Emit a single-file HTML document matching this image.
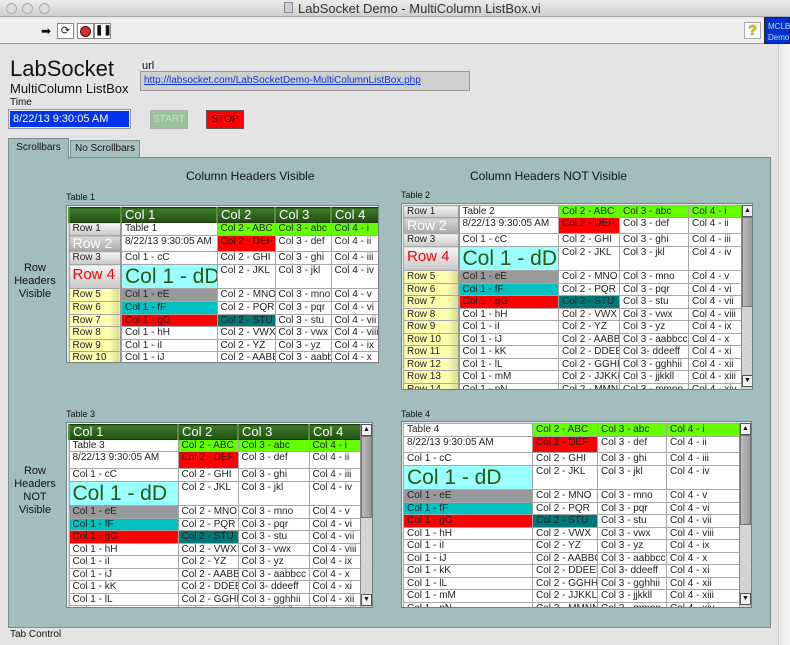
<!DOCTYPE html>
<html><head><meta charset="utf-8"><style>
*{margin:0;padding:0;box-sizing:border-box}
body{width:790px;height:645px;overflow:hidden;background:#e4e4e4;font-family:"Liberation Sans",sans-serif;position:relative;color:#111}
.a{position:absolute;white-space:nowrap}
.t{position:absolute;background:#d4d8d8;border:1px solid #6f8282;overflow:hidden;box-shadow:inset 1px 1px 0 #eee}
table{border-collapse:collapse;table-layout:fixed;font:10px "Liberation Sans",sans-serif;position:absolute;left:1px;top:1px}
td{border:1px solid #a6a6a6;padding:0 0 0 3px;white-space:nowrap;overflow:hidden;background:#fff;vertical-align:top;line-height:11px;color:#222}
td.h{background:linear-gradient(#3f7a2a,#22500f);color:#fff;font-size:13px;line-height:14px;border-color:#1a3a0a;border-left:2px solid #5a8a40}
td.g{background:#66ff00}
td.r{background:#ff0000}
td.gr{background:#999}
td.c{background:#00c0c0}
td.tl{background:#007878}
td.big{background:#99ffff;color:#2a5a10;font-size:21px;line-height:23px}
td.rh{background:linear-gradient(#f4f4f4,#c8c8c8);color:#222;border-right:2px solid #999}
td.rh2{background:linear-gradient(#d8d8d8,#a8a8a8);color:#fff;font-size:14px;line-height:14px;border-right:2px solid #999}
td.rh4{background:linear-gradient(#f4f4f4,#c8c8c8);color:#f00;font-size:15px;line-height:19px;border-right:2px solid #999}
td.ry{background:linear-gradient(90deg,#ffffb0 80%,#d8d890);border-right:2px solid #999}
.sb{position:absolute;width:12px;background:repeating-linear-gradient(45deg,#c8c8c8 0 1px,#e0e0e0 1px 2px);border-left:1px solid #888}
.sb .up,.sb .dn{position:absolute;left:0;width:11px;height:12px;background:#f0f0f0;border:1px solid #555;font-size:7px;line-height:10px;text-align:center}
.sb .th{position:absolute;left:0;width:11px;background:linear-gradient(90deg,#bbb,#999);border:1px solid #777}
</style></head><body>
<div class="a" style="left:0;top:0;width:790px;height:17px;background:linear-gradient(#ececec,#cfcfcf);border-bottom:1px solid #aaa"></div>
<div class="a" style="left:6px;top:3px;width:11px;height:11px;border-radius:50%;background:#ddd;border:1px solid #aaa"></div>
<div class="a" style="left:22px;top:3px;width:11px;height:11px;border-radius:50%;background:#ddd;border:1px solid #aaa"></div>
<div class="a" style="left:39px;top:3px;width:11px;height:11px;border-radius:50%;background:#ddd;border:1px solid #aaa"></div>
<div class="a" style="left:284px;top:2px;width:9px;height:11px;background:#ccd;border:1px solid #888"></div>
<div class="a" style="left:298px;top:1px;font-size:13px;color:#333">LabSocket Demo - MultiColumn ListBox.vi</div>
<div class="a" style="left:0;top:18px;width:790px;height:26px;background:#ededed;border-bottom:1px solid #999"></div>
<div class="a" style="left:41px;top:24px;font-size:12px">➡</div>
<div class="a" style="left:57px;top:23px;width:17px;height:16px;border:1px solid #888;background:#fff;font-size:11px;text-align:center">⟳</div>
<div class="a" style="left:77px;top:23px;width:17px;height:16px;border:1px solid #888;background:#fff"><div style="margin:2px;width:11px;height:11px;border-radius:50%;background:#c33;border:1px solid #600"></div></div>
<div class="a" style="left:94px;top:23px;width:17px;height:16px;border:1px solid #888;background:#fff;font-size:10px;font-weight:bold;text-align:center;line-height:14px">❚❚</div>
<div class="a" style="left:744px;top:22px;width:17px;height:17px;border:1px solid #aaa;background:#fafafa;color:#cc0;font-weight:bold;font-size:15px;text-align:center;line-height:16px;text-shadow:0 0 1px #000">?</div>
<div class="a" style="left:764px;top:17px;width:26px;height:27px;background:#0033cc;border:1px solid #222;color:#cde;font-size:8px;line-height:11px;padding:3px 0 0 3px;white-space:normal">MCLB Demo</div>
<div class="a" style="left:778px;top:44px;width:12px;height:601px;background:linear-gradient(90deg,#e8e8e8,#f8f8f8);border-left:1px solid #ccc"></div>
<div class="a" style="left:10px;top:56px;font-size:22px">LabSocket</div>
<div class="a" style="left:10px;top:81px;font-size:13px">MultiColumn ListBox</div>
<div class="a" style="left:10px;top:97px;font-size:10px">Time</div>
<div class="a" style="left:9px;top:110px;width:121px;height:18px;background:#0033ee;border:1px solid #eee;box-shadow:0 0 0 1px #999;color:#fff;font-size:11px;padding:2px 0 0 3px">8/22/13 9:30:05 AM</div>
<div class="a" style="left:142px;top:60px;font-size:11px">url</div>
<div class="a" style="left:140px;top:71px;width:330px;height:20px;background:#d0d0d0;border:1px solid #999;font-size:10px;padding:3px 0 0 3px;color:#1133cc;text-decoration:underline;overflow:hidden">http://labsocket.com/LabSocketDemo-MultiColumnListBox.php</div>
<div class="a" style="left:150px;top:110px;width:38px;height:19px;background:#99c499;border:1px solid #aaa;color:#c8e0c8;font-size:10px;text-align:center;line-height:17px">START</div>
<div class="a" style="left:206px;top:110px;width:38px;height:19px;background:#ff0000;border:1px solid #555;color:#300;font-size:10px;text-align:center;line-height:17px">STOP</div>
<div class="a" style="left:70px;top:140px;width:70px;height:18px;background:#a8c0c0;border:1px solid #7a9090;font-size:10px;text-align:center;line-height:16px">No Scrollbars</div>
<div class="a" style="left:8px;top:157px;width:763px;height:471px;background:#a3bdbd;border:1px solid #7a9090"></div>
<div class="a" style="left:8px;top:138px;width:61px;height:21px;background:#a3bdbd;border:1px solid #7a9090;border-bottom:none;font-size:10px;text-align:center;line-height:17px">Scrollbars</div>
<div class="a" style="left:10px;top:629px;font-size:10px">Tab Control</div>
<div class="a" style="left:186px;top:169px;font-size:12px">Column Headers Visible</div>
<div class="a" style="left:470px;top:169px;font-size:12px">Column Headers NOT Visible</div>
<div class="a" style="left:14px;top:262px;width:42px;font-size:11px;text-align:center;white-space:normal;line-height:13px">Row Headers Visible</div>
<div class="a" style="left:14px;top:465px;width:42px;font-size:11px;text-align:center;white-space:normal;line-height:13px">Row Headers NOT Visible</div>
<div class="a" style="left:66px;top:192px;font-size:9px">Table 1</div>
<div class="a" style="left:401px;top:190px;font-size:9px">Table 2</div>
<div class="a" style="left:66px;top:409px;font-size:9px">Table 3</div>
<div class="a" style="left:401px;top:409px;font-size:9px">Table 4</div>

<div class="t" style="left:66px;top:205px;width:313px;height:158px">
<table style="width:311px"><colgroup><col style="width:52px"><col style="width:96px"><col style="width:58px"><col style="width:56px"><col style="width:49px"></colgroup>
<tr style="height:15px"><td class="h"></td><td class="h">Col 1</td><td class="h">Col 2</td><td class="h">Col 3</td><td class="h">Col 4</td></tr>
<tr style="height:13px"><td class="rh">Row 1</td><td>Table 1</td><td class="g">Col 2 - ABC</td><td class="g">Col 3 - abc</td><td class="g">Col 4 - i</td></tr>
<tr style="height:16px"><td class="rh2">Row 2</td><td>8/22/13 9:30:05 AM</td><td class="r">Col 2 - DEF</td><td>Col 3 - def</td><td>Col 4 - ii</td></tr>
<tr style="height:13px"><td class="rh">Row 3</td><td>Col 1 - cC</td><td>Col 2 - GHI</td><td>Col 3 - ghi</td><td>Col 4 - iii</td></tr>
<tr style="height:24px"><td class="rh4">Row 4</td><td class="big">Col 1 - dD</td><td>Col 2 - JKL</td><td>Col 3 - jkl</td><td>Col 4 - iv</td></tr>
<tr style="height:13px"><td class="ry">Row 5</td><td class="gr">Col 1 - eE</td><td>Col 2 - MNO</td><td>Col 3 - mno</td><td>Col 4 - v</td></tr>
<tr style="height:13px"><td class="ry">Row 6</td><td class="c">Col 1 - fF</td><td>Col 2 - PQR</td><td>Col 3 - pqr</td><td>Col 4 - vi</td></tr>
<tr style="height:12px"><td class="ry">Row 7</td><td class="r">Col 1 - gG</td><td class="tl">Col 2 - STU</td><td>Col 3 - stu</td><td>Col 4 - vii</td></tr>
<tr style="height:13px"><td class="ry">Row 8</td><td>Col 1 - hH</td><td>Col 2 - VWX</td><td>Col 3 - vwx</td><td>Col 4 - viii</td></tr>
<tr style="height:12px"><td class="ry">Row 9</td><td>Col 1 - iI</td><td>Col 2 - YZ</td><td>Col 3 - yz</td><td>Col 4 - ix</td></tr>
<tr style="height:13px"><td class="ry">Row 10</td><td>Col 1 - iJ</td><td>Col 2 - AABBCC</td><td>Col 3 - aabbcc</td><td>Col 4 - x</td></tr>
</table></div>

<div class="t" style="left:401px;top:203px;width:352px;height:187px">
<table style="width:338px"><colgroup><col style="width:55px"><col style="width:100px"><col style="width:61px"><col style="width:69px"><col style="width:53px"></colgroup>
<tr style="height:12px"><td class="rh">Row 1</td><td>Table 2</td><td class="g">Col 2 - ABC</td><td class="g">Col 3 - abc</td><td class="g">Col 4 - i</td></tr>
<tr style="height:16px"><td class="rh2">Row 2</td><td>8/22/13 9:30:05 AM</td><td class="r">Col 2 - DEF</td><td>Col 3 - def</td><td>Col 4 - ii</td></tr>
<tr style="height:13px"><td class="rh">Row 3</td><td>Col 1 - cC</td><td>Col 2 - GHI</td><td>Col 3 - ghi</td><td>Col 4 - iii</td></tr>
<tr style="height:24px"><td class="rh4">Row 4</td><td class="big">Col 1 - dD</td><td>Col 2 - JKL</td><td>Col 3 - jkl</td><td>Col 4 - iv</td></tr>
<tr style="height:13px"><td class="ry">Row 5</td><td class="gr">Col 1 - eE</td><td>Col 2 - MNO</td><td>Col 3 - mno</td><td>Col 4 - v</td></tr>
<tr style="height:12px"><td class="ry">Row 6</td><td class="c">Col 1 - fF</td><td>Col 2 - PQR</td><td>Col 3 - pqr</td><td>Col 4 - vi</td></tr>
<tr style="height:13px"><td class="ry">Row 7</td><td class="r">Col 1 - gG</td><td class="tl">Col 2 - STU</td><td>Col 3 - stu</td><td>Col 4 - vii</td></tr>
<tr style="height:12px"><td class="ry">Row 8</td><td>Col 1 - hH</td><td>Col 2 - VWX</td><td>Col 3 - vwx</td><td>Col 4 - viii</td></tr>
<tr style="height:13px"><td class="ry">Row 9</td><td>Col 1 - iI</td><td>Col 2 - YZ</td><td>Col 3 - yz</td><td>Col 4 - ix</td></tr>
<tr style="height:12px"><td class="ry">Row 10</td><td>Col 1 - iJ</td><td>Col 2 - AABBCC</td><td>Col 3 - aabbcc</td><td>Col 4 - x</td></tr>
<tr style="height:13px"><td class="ry">Row 11</td><td>Col 1 - kK</td><td>Col 2 - DDEEFF</td><td>Col 3- ddeeff</td><td>Col 4 - xi</td></tr>
<tr style="height:12px"><td class="ry">Row 12</td><td>Col 1 - lL</td><td>Col 2 - GGHHII</td><td>Col 3 - gghhii</td><td>Col 4 - xii</td></tr>
<tr style="height:13px"><td class="ry">Row 13</td><td>Col 1 - mM</td><td>Col 2 - JJKKLL</td><td>Col 3 - jjkkll</td><td>Col 4 - xiii</td></tr>
<tr style="height:12px"><td class="ry">Row 14</td><td>Col 1 - nN</td><td>Col 2 - MMNN</td><td>Col 3 - mmnn</td><td>Col 4 - xiv</td></tr>
</table>
<div class="sb" style="left:339px;top:1px;height:182px"><div class="up" style="top:0">▲</div><div class="th" style="top:12px;height:90px"></div><div class="dn" style="bottom:0">▼</div></div>
</div>

<div class="t" style="left:66px;top:422px;width:307px;height:186px">
<table style="width:291px"><colgroup><col style="width:109px"><col style="width:60px"><col style="width:71px"><col style="width:51px"></colgroup>
<tr style="height:15px"><td class="h">Col 1</td><td class="h">Col 2</td><td class="h">Col 3</td><td class="h">Col 4</td></tr>
<tr style="height:12px"><td>Table 3</td><td class="g">Col 2 - ABC</td><td class="g">Col 3 - abc</td><td class="g">Col 4 - i</td></tr>
<tr style="height:17px"><td>8/22/13 9:30:05 AM</td><td class="r">Col 2 - DEF</td><td>Col 3 - def</td><td>Col 4 - ii</td></tr>
<tr style="height:13px"><td>Col 1 - cC</td><td>Col 2 - GHI</td><td>Col 3 - ghi</td><td>Col 4 - iii</td></tr>
<tr style="height:24px"><td class="big">Col 1 - dD</td><td>Col 2 - JKL</td><td>Col 3 - jkl</td><td>Col 4 - iv</td></tr>
<tr style="height:13px"><td class="gr">Col 1 - eE</td><td>Col 2 - MNO</td><td>Col 3 - mno</td><td>Col 4 - v</td></tr>
<tr style="height:12px"><td class="c">Col 1 - fF</td><td>Col 2 - PQR</td><td>Col 3 - pqr</td><td>Col 4 - vi</td></tr>
<tr style="height:13px"><td class="r">Col 1 - gG</td><td class="tl">Col 2 - STU</td><td>Col 3 - stu</td><td>Col 4 - vii</td></tr>
<tr style="height:12px"><td>Col 1 - hH</td><td>Col 2 - VWX</td><td>Col 3 - vwx</td><td>Col 4 - viii</td></tr>
<tr style="height:13px"><td>Col 1 - iI</td><td>Col 2 - YZ</td><td>Col 3 - yz</td><td>Col 4 - ix</td></tr>
<tr style="height:12px"><td>Col 1 - iJ</td><td>Col 2 - AABBCC</td><td>Col 3 - aabbcc</td><td>Col 4 - x</td></tr>
<tr style="height:13px"><td>Col 1 - kK</td><td>Col 2 - DDEEFF</td><td>Col 3- ddeeff</td><td>Col 4 - xi</td></tr>
<tr style="height:12px"><td>Col 1 - lL</td><td>Col 2 - GGHHII</td><td>Col 3 - gghhii</td><td>Col 4 - xii</td></tr>
<tr style="height:12px"><td>Col 1 - mM</td><td>Col 2 - JJKKLL</td><td>Col 3 - jjkkll</td><td>Col 4 - xiii</td></tr>
</table>
<div class="sb" style="left:293px;top:1px;height:182px"><div class="up" style="top:0">▲</div><div class="th" style="top:12px;height:82px"></div><div class="dn" style="bottom:0">▼</div></div>
</div>

<div class="t" style="left:401px;top:421px;width:351px;height:187px">
<table style="width:336px"><colgroup><col style="width:129px"><col style="width:65px"><col style="width:69px"><col style="width:73px"></colgroup>
<tr style="height:13px"><td>Table 4</td><td class="g">Col 2 - ABC</td><td class="g">Col 3 - abc</td><td class="g">Col 4 - i</td></tr>
<tr style="height:16px"><td>8/22/13 9:30:05 AM</td><td class="r">Col 2 - DEF</td><td>Col 3 - def</td><td>Col 4 - ii</td></tr>
<tr style="height:13px"><td>Col 1 - cC</td><td>Col 2 - GHI</td><td>Col 3 - ghi</td><td>Col 4 - iii</td></tr>
<tr style="height:24px"><td class="big">Col 1 - dD</td><td>Col 2 - JKL</td><td>Col 3 - jkl</td><td>Col 4 - iv</td></tr>
<tr style="height:13px"><td class="gr">Col 1 - eE</td><td>Col 2 - MNO</td><td>Col 3 - mno</td><td>Col 4 - v</td></tr>
<tr style="height:12px"><td class="c">Col 1 - fF</td><td>Col 2 - PQR</td><td>Col 3 - pqr</td><td>Col 4 - vi</td></tr>
<tr style="height:13px"><td class="r">Col 1 - gG</td><td class="tl">Col 2 - STU</td><td>Col 3 - stu</td><td>Col 4 - vii</td></tr>
<tr style="height:12px"><td>Col 1 - hH</td><td>Col 2 - VWX</td><td>Col 3 - vwx</td><td>Col 4 - viii</td></tr>
<tr style="height:13px"><td>Col 1 - iI</td><td>Col 2 - YZ</td><td>Col 3 - yz</td><td>Col 4 - ix</td></tr>
<tr style="height:12px"><td>Col 1 - iJ</td><td>Col 2 - AABBCC</td><td>Col 3 - aabbcc</td><td>Col 4 - x</td></tr>
<tr style="height:13px"><td>Col 1 - kK</td><td>Col 2 - DDEEFF</td><td>Col 3- ddeeff</td><td>Col 4 - xi</td></tr>
<tr style="height:12px"><td>Col 1 - lL</td><td>Col 2 - GGHHII</td><td>Col 3 - gghhii</td><td>Col 4 - xii</td></tr>
<tr style="height:13px"><td>Col 1 - mM</td><td>Col 2 - JJKKLL</td><td>Col 3 - jjkkll</td><td>Col 4 - xiii</td></tr>
<tr style="height:12px"><td>Col 1 - nN</td><td>Col 2 - MMNN</td><td>Col 3 - mmnn</td><td>Col 4 - xiv</td></tr>
</table>
<div class="sb" style="left:337px;top:1px;height:182px"><div class="up" style="top:0">▲</div><div class="th" style="top:12px;height:90px"></div><div class="dn" style="bottom:0">▼</div></div>
</div>
</body></html>
